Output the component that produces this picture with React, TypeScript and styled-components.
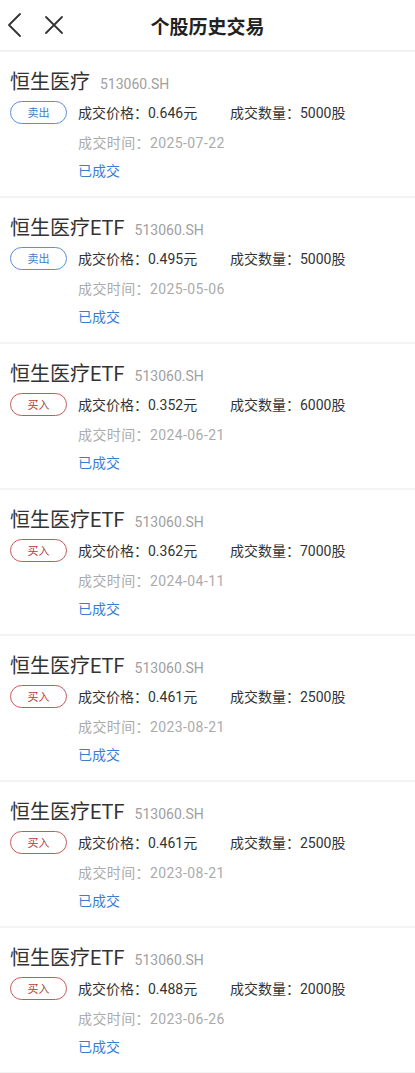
import styled, { createGlobalStyle } from 'styled-components'

const GlobalStyle = createGlobalStyle`
  html, body {
    margin: 0;
    padding: 0;
    background: #ffffff;
    font-family: Roboto, "Noto Sans CJK SC", sans-serif;
  }
`;

type Side = 'buy' | 'sell'

interface Trade {
  name: string
  code: string
  side: Side
  price: string
  qty: string
  date: string
}

const trades: Trade[] = [
  { name: '恒生医疗', code: '513060.SH', side: 'sell', price: '0.646', qty: '5000', date: '2025-07-22' },
  { name: '恒生医疗ETF', code: '513060.SH', side: 'sell', price: '0.495', qty: '5000', date: '2025-05-06' },
  { name: '恒生医疗ETF', code: '513060.SH', side: 'buy', price: '0.352', qty: '6000', date: '2024-06-21' },
  { name: '恒生医疗ETF', code: '513060.SH', side: 'buy', price: '0.362', qty: '7000', date: '2024-04-11' },
  { name: '恒生医疗ETF', code: '513060.SH', side: 'buy', price: '0.461', qty: '2500', date: '2023-08-21' },
  { name: '恒生医疗ETF', code: '513060.SH', side: 'buy', price: '0.461', qty: '2500', date: '2023-08-21' },
  { name: '恒生医疗ETF', code: '513060.SH', side: 'buy', price: '0.488', qty: '2000', date: '2023-06-26' },
]

const Page = styled.div`
  width: 415px;
  min-height: 1073px;
  background: #fff;
`;

const Header = styled.div`
  height: 50px;
  display: flex;
  align-items: center;
  position: relative;
  border-bottom: 2px solid #f2f2f2;
`;

const NavIcons = styled.div`
  display: flex;
  align-items: center;
  gap: 21px;
  padding-left: 7px;
`;

const Title = styled.h1`
  position: absolute;
  left: 0;
  right: 0;
  margin: 0;
  text-align: center;
  font-size: 19px;
  font-weight: 700;
  color: #222;
  pointer-events: none;
`;

const Card = styled.div`
  padding: 18px 0 15px 10px;
  border-bottom: 2px solid #f3f3f3;
`;

const NameLine = styled.div`
  display: flex;
  align-items: baseline;
  height: 24px;
  line-height: 24px;
`;

const Name = styled.span`
  font-size: 20px;
  color: #333;
`;

const Code = styled.span`
  font-size: 14px;
  color: #a0a0a0;
  margin-left: 10px;
`;

const InfoRow = styled.div`
  display: flex;
  align-items: center;
  margin-top: 6px;
  height: 24px;
`;

const Badge = styled.span<{ side: Side }>`
  box-sizing: border-box;
  width: 57px;
  height: 23px;
  border-radius: 12px;
  border: 1px solid ${(p) => (p.side === 'sell' ? '#5a8fd2' : '#c45b5b')};
  color: ${(p) => (p.side === 'sell' ? '#3f7bc8' : '#b83a3a')};
  font-size: 11px;
  display: flex;
  align-items: center;
  justify-content: center;
  margin-right: 11px;
`;

const Field = styled.span<{ width?: number }>`
  font-size: 14px;
  color: #333;
  width: ${(p) => (p.width ? `${p.width}px` : 'auto')};
`;

const Details = styled.div`
  padding-left: 68px;
`;

const Time = styled.div`
  margin-top: 9px;
  line-height: 20px;
  font-size: 14px;
  letter-spacing: 0.4px;
  color: #ababab;
`;

const Status = styled.div`
  margin-top: 8px;
  line-height: 20px;
  font-size: 14px;
  color: #3b7dd3;
`;

const BackIcon = () => (
  <svg width="16" height="26" viewBox="0 0 16 26">
    <path d="M13 2 L2 13 L13 24" fill="none" stroke="#333" strokeWidth="1.8" strokeLinecap="round" strokeLinejoin="round" />
  </svg>
)

const CloseIcon = () => (
  <svg width="20" height="20" viewBox="0 0 20 20">
    <path d="M2 2 L18 18 M18 2 L2 18" fill="none" stroke="#333" strokeWidth="1.8" strokeLinecap="round" />
  </svg>
)

const TradeCard = ({ t }: { t: Trade }) =>
  <Card>
    <NameLine>
      <Name>{t.name}</Name>
      <Code>{t.code}</Code>
    </NameLine>
    <InfoRow>
      <Badge side={t.side}>{t.side === 'sell' ? '卖出' : '买入'}</Badge>
      <Field width={152}>成交价格：{t.price}元</Field>
      <Field>成交数量：{t.qty}股</Field>
    </InfoRow>
    <Details>
      <Time>成交时间：{t.date}</Time>
      <Status>已成交</Status>
    </Details>
  </Card>

export default function App() {
  return (
    <Page>
      <GlobalStyle />
      <Header>
        <NavIcons>
          <BackIcon />
          <CloseIcon />
        </NavIcons>
        <Title>个股历史交易</Title>
      </Header>
      {trades.map((t, i) => <TradeCard key={i} t={t} />)}
    </Page>
  )
}
